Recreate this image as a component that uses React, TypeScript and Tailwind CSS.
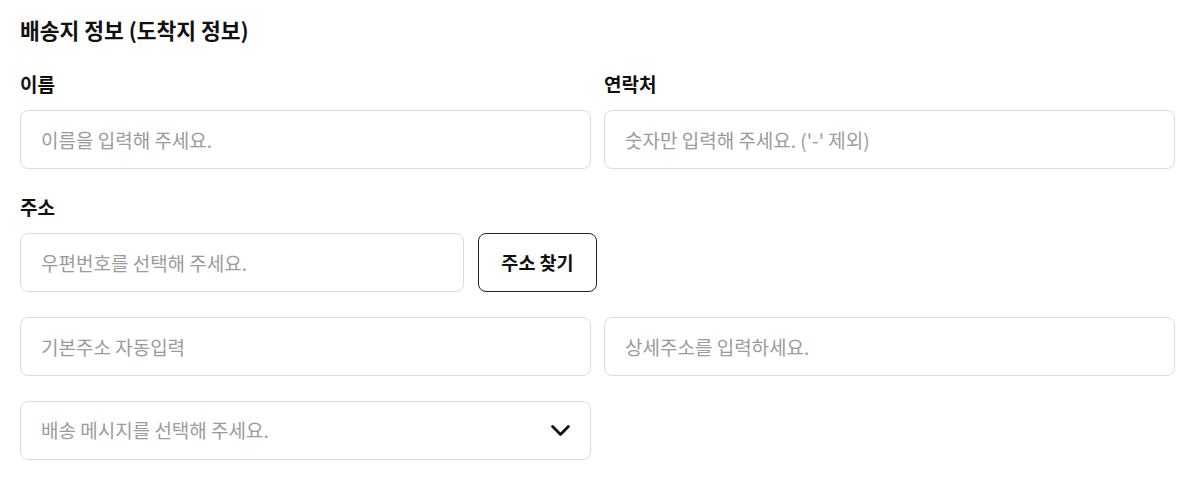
import { useState } from 'react';

const FONT = { fontFamily: '"Noto Sans CJK KR", "Noto Sans", sans-serif' };

function Field({ placeholder, className = '' }: { placeholder: string; className?: string }) {
  const [value, setValue] = useState('');
  return (
    <input
      className={`h-[59px] w-full rounded-lg border border-[#dcdcdc] bg-white px-5 text-[19px] text-[#222] outline-none placeholder:text-[#9b9b9b] ${className}`}
      placeholder={placeholder}
      value={value}
      onChange={(e) => setValue(e.target.value)}
    />
  );
}

function Label({ children }: { children: string }) {
  return <div className="mb-[14px] text-[19px] font-bold leading-6 text-[#111]">{children}</div>;
}

export default function App() {
  return (
    <div className="min-h-screen bg-white pl-5 pr-6 pt-4 pb-8" style={FONT}>
      <h2 className="text-[21.5px] font-bold leading-7 text-[#111]">배송지 정보 (도착지 정보)</h2>

      <div className="mt-7 grid grid-cols-2 gap-x-[13px]">
        <div>
          <Label>이름</Label>
          <Field placeholder="이름을 입력해 주세요." />
        </div>
        <div>
          <Label>연락처</Label>
          <Field placeholder="숫자만 입력해 주세요. ('-' 제외)" />
        </div>
      </div>

      <div className="mt-[26px]">
        <Label>주소</Label>
        <div className="flex gap-[14px]">
          <div className="w-[444px]">
            <Field placeholder="우편번호를 선택해 주세요." />
          </div>
          <button className="h-[59px] w-[119px] rounded-lg border border-[#222] bg-white text-[18.5px] font-bold text-[#111]">
            주소 찾기
          </button>
        </div>
        <div className="mt-[25px] grid grid-cols-2 gap-x-[13px]">
          <Field placeholder="기본주소 자동입력" />
          <Field placeholder="상세주소를 입력하세요." />
        </div>
        <div className="mt-[25px] grid grid-cols-2 gap-x-[13px]">
          <button className="flex h-[59px] w-full items-center justify-between rounded-lg border border-[#dcdcdc] bg-white pl-5 pr-5 text-left text-[19px] text-[#9b9b9b]">
            <span>배송 메시지를 선택해 주세요.</span>
            <svg width="19" height="11" viewBox="0 0 19 11" fill="none" stroke="#111" strokeWidth="2.8" strokeLinecap="round" strokeLinejoin="round">
              <path d="M1.6 1.6L9.5 9.4L17.4 1.6" />
            </svg>
          </button>
        </div>
      </div>
    </div>
  );
}
